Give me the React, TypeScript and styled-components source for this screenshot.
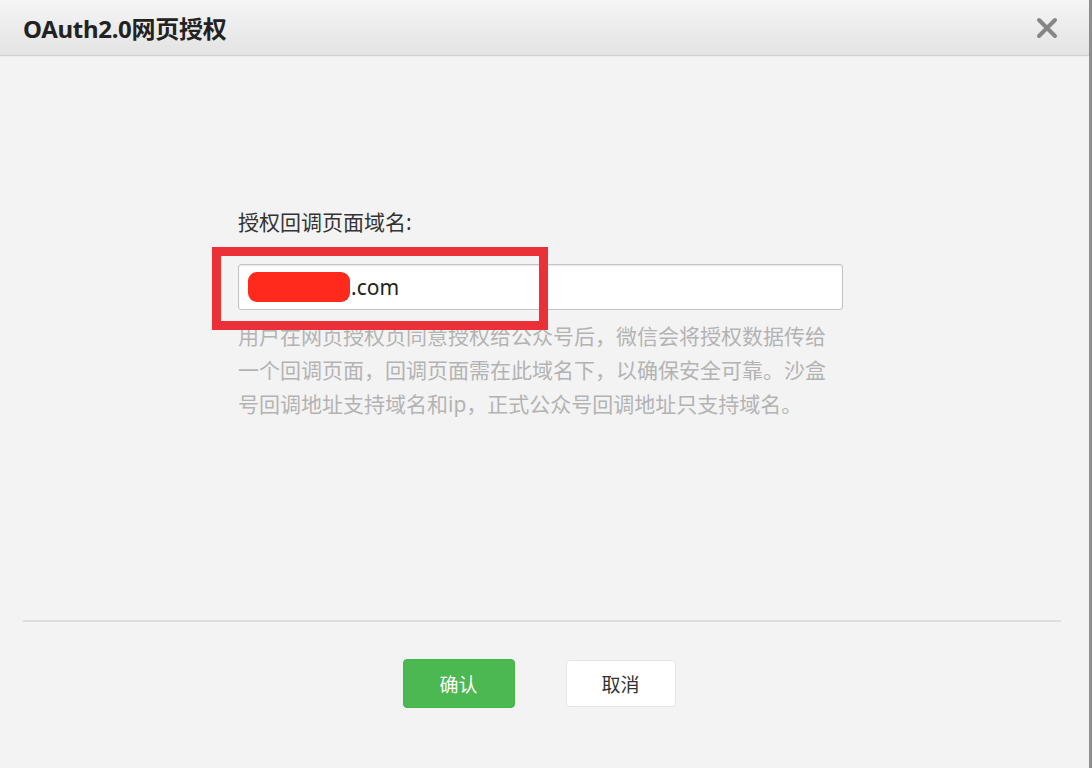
import styled, { createGlobalStyle } from "styled-components";

const GlobalStyle = createGlobalStyle`
    html, body {
        margin: 0;
        padding: 0;
        background: #f3f3f3;
    }
    * {
        box-sizing: border-box;
    }
`;

const Dialog = styled.div`
    height: 100vh;
    display: flex;
    flex-direction: column;
    background: #f3f3f3;
    border-right: 3px solid #8e8e8e;
    font-family: "Noto Sans", "Noto Sans CJK SC", sans-serif;
    color: #333;
`;

const Header = styled.div`
    height: 56px;
    flex-shrink: 0;
    display: flex;
    align-items: center;
    justify-content: space-between;
    padding: 0 30px 0 23px;
    background: linear-gradient(#f5f5f5, #e3e3e3);
    border-bottom: 1px solid #cfcfcf;
    box-shadow: 0 1px 0 #ececec;
`;

const Title = styled.h3`
    margin: 0;
    font-size: 24px;
    font-weight: 700;
    color: #222;
    letter-spacing: -0.3px;
`;

const Close = styled.button`
    border: 0;
    background: transparent;
    padding: 0;
    width: 24px;
    height: 24px;
    display: flex;
    align-items: center;
    justify-content: center;
    cursor: pointer;
`;

const Main = styled.div`
    flex: 1;
    padding: 151px 0 0 238px;
`;

const Form = styled.div`
    width: 605px;
`;

const Label = styled.div`
    font-size: 21px;
    line-height: 30px;
    color: #333;
    margin-bottom: 27px;
`;

const InputWrap = styled.div`
    position: relative;
`;

const Input = styled.div`
    height: 46px;
    display: flex;
    align-items: center;
    padding-left: 9px;
    background: #fff;
    border: 1px solid #c4c4c4;
    border-radius: 3px;
    box-shadow: inset 0 1px 2px rgba(0, 0, 0, 0.1);
    font-size: 21px;
    color: #222;
`;

const Masked = styled.span`
    display: inline-block;
    width: 102px;
    height: 30px;
    border-radius: 9px;
    background: #ff2a1c;
    margin-right: 1px;
`;

const Highlight = styled.div`
    position: absolute;
    left: -26px;
    top: -17px;
    width: 336px;
    height: 83px;
    border: 9px solid #ec3038;
    pointer-events: none;
`;

const Help = styled.p`
    margin: 9px 0 0;
    font-size: 21px;
    line-height: 34px;
    color: #b3b3b3;
`;

const Footer = styled.div`
    height: 148px;
    flex-shrink: 0;
    margin: 0 28px 0 23px;
    border-top: 2px solid #dedede;
    display: flex;
    justify-content: center;
    gap: 51px;
    padding: 37px 6px 0 0;
`;

interface ButtonProps {
    $primary?: boolean;
}

const Button = styled.button<ButtonProps>`
    border-radius: 4px;
    font-family: "Noto Sans CJK SC", sans-serif;
    font-size: 19px;
    cursor: pointer;
    border: 1px solid ${(p) => (p.$primary ? "#44b549" : "#e6e6e6")};
    background: ${(p) => (p.$primary ? "#4cb852" : "#fff")};
    color: ${(p) => (p.$primary ? "#fff" : "#333")};
    margin-top: ${(p) => (p.$primary ? "0" : "1px")};
    height: ${(p) => (p.$primary ? "49px" : "47px")};
    width: ${(p) => (p.$primary ? "112px" : "110px")};
`;

function CloseIcon() {
    return (
        <svg width="22" height="22" viewBox="0 0 22 22">
            <path d="M3 3 L19 19 M19 3 L3 19" stroke="#868686" strokeWidth="4" strokeLinecap="round" />
        </svg>
    );
}

function App() {
    return (
        <>
            <GlobalStyle />
            <Dialog>
                <Header>
                    <Title>OAuth2.0网页授权</Title>
                    <Close aria-label="关闭">
                        <CloseIcon />
                    </Close>
                </Header>
                <Main>
                    <Form>
                        <Label>授权回调页面域名:</Label>
                        <InputWrap>
                            <Input>
                                <Masked />
                                .com
                            </Input>
                            <Highlight />
                        </InputWrap>
                        <Help>
                            用户在网页授权页同意授权给公众号后，微信会将授权数据传给一个回调页面，回调页面需在此域名下，以确保安全可靠。沙盒号回调地址支持域名和ip，正式公众号回调地址只支持域名。
                        </Help>
                    </Form>
                </Main>
                <Footer>
                    <Button $primary>确认</Button>
                    <Button>取消</Button>
                </Footer>
            </Dialog>
        </>
    );
}

export default App;
